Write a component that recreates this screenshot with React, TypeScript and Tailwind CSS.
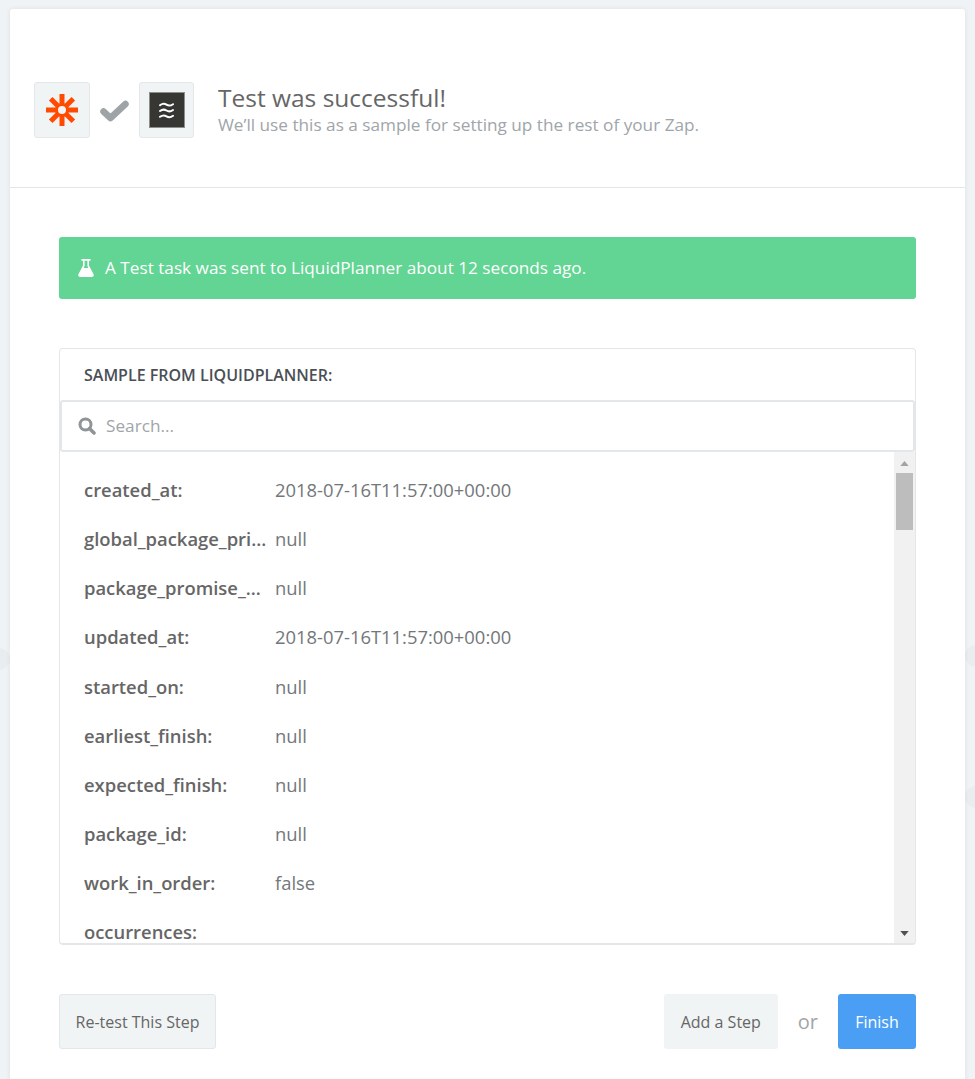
import React from "react";

const rows: [string, string][] = [
  ["created_at:", "2018-07-16T11:57:00+00:00"],
  ["global_package_priority:", "null"],
  ["package_promise_by:", "null"],
  ["updated_at:", "2018-07-16T11:57:00+00:00"],
  ["started_on:", "null"],
  ["earliest_finish:", "null"],
  ["expected_finish:", "null"],
  ["package_id:", "null"],
  ["work_in_order:", "false"],
  ["occurrences:", ""],
];

function ZapierLogo() {
  return (
    <svg width="32" height="32" viewBox="0 0 32 32">
      <g stroke="#ff4a00" strokeWidth="5">
        <line x1="16" y1="0" x2="16" y2="11" />
        <line x1="16" y1="21" x2="16" y2="32" />
        <line x1="0" y1="16" x2="11" y2="16" />
        <line x1="21" y1="16" x2="32" y2="16" />
        <line x1="4.7" y1="4.7" x2="12.5" y2="12.5" />
        <line x1="19.5" y1="19.5" x2="27.3" y2="27.3" />
        <line x1="27.3" y1="4.7" x2="19.5" y2="12.5" />
        <line x1="12.5" y1="19.5" x2="4.7" y2="27.3" />
      </g>
      <circle cx="16" cy="16" r="5.5" fill="#f1f4f5" stroke="#ff4a00" strokeWidth="3" />
    </svg>
  );
}

function LiquidLogo() {
  return (
    <div className="flex h-[36px] w-[36px] items-center justify-center border border-[#8d8d8b] bg-[#363633]">
      <svg width="15" height="17" viewBox="0 0 15 17" fill="none" stroke="#ffffff" strokeWidth="2" strokeLinecap="round">
        <path d="M1 3.2C3.5 1.4 5.5 1.4 7.5 2.7C9.5 4 11.5 4 14 2.2" />
        <path d="M1 9C3.5 7.2 5.5 7.2 7.5 8.5C9.5 9.8 11.5 9.8 14 8" />
        <path d="M1 14.8C3.5 13 5.5 13 7.5 14.3C9.5 15.6 11.5 15.6 14 13.8" />
      </svg>
    </div>
  );
}

export default function App() {
  return (
    <div className="relative h-[1079px] overflow-hidden bg-[#eff3f5] px-[10px] pt-[9px] font-['Open_Sans',sans-serif] text-[#666666]">
      <div className="absolute left-[-12px] top-[648px] h-[22px] w-[22px] rounded-full bg-[#e9edef]" />
      <div className="absolute right-[-12px] top-[645px] h-[22px] w-[22px] rounded-full bg-[#e9edef]" />
      <div className="absolute right-[-12px] top-[786px] h-[22px] w-[22px] rounded-full bg-[#e9edef]" />
      <div className="relative h-[1200px] rounded-t-[3px] bg-white shadow-[0_0_5px_rgba(0,0,0,0.08)]">
        <header className="flex h-[179px] items-start border-b border-[#e3e7e9] pl-[24px] pt-[73px]">
          <div className="flex h-[56px] w-[56px] items-center justify-center rounded-[3px] border border-[#e3e7e9] bg-[#f1f4f5]">
            <ZapierLogo />
          </div>
          <svg className="mx-[10px] mt-[18px]" width="29" height="22" viewBox="0 0 29 22">
            <path d="M3.5 11.5L10.5 18L25.5 4" fill="none" stroke="#9ea3a6" strokeWidth="6.5" strokeLinecap="round" strokeLinejoin="round" />
          </svg>
          <div className="flex h-[56px] w-[55px] items-center justify-center rounded-[3px] border border-[#e3e7e9] bg-[#f1f4f5]">
            <LiquidLogo />
          </div>
          <div className="ml-[24px]">
            <div className="text-[24.5px] leading-[32px] text-[#666666]">Test was successful!</div>
            <div className="text-[17.2px] leading-[22px] text-[#a0a5a9]">We’ll use this as a sample for setting up the rest of your Zap.</div>
          </div>
        </header>

        <main className="px-[49px] pt-[49px]">
          <div className="flex h-[62px] items-center rounded-[3px] bg-[#62d493] pl-[19px] text-[17.2px] text-white">
            <svg className="mr-[11px]" width="16" height="18" viewBox="0 0 16 18" fill="#ffffff">
              <path d="M3.5 0H12.5V1.8H11V6.5L15.6 15.2C16.2 16.5 15.4 18 13.8 18H2.2C0.6 18 -0.2 16.5 0.4 15.2L5 6.5V1.8H3.5V0Z" />
              <path d="M6.6 1.8H9.4V7L10.5 9H5.5L6.6 7Z" fill="#62d493" />
            </svg>
            A Test task was sent to LiquidPlanner about 12 seconds ago.
          </div>

          <section className="mt-[49px] h-[597px] overflow-hidden rounded-[4px] border border-b-2 border-[#e3e7e9]">
            <div className="flex h-[51px] items-center pl-[24px] text-[16px] font-semibold text-[#4a4f55]">SAMPLE FROM LIQUIDPLANNER:</div>
            <div className="flex h-[52px] items-center rounded-[3px] border-2 border-[#e3e7e9] pl-[16px] text-[17.2px] text-[#a0a5a9]">
              <svg className="mr-[10px]" width="18" height="18" viewBox="0 0 18 18" fill="none" stroke="#8f9498">
                <circle cx="7.5" cy="7.5" r="5.5" strokeWidth="3" />
                <line x1="11.5" y1="11.5" x2="16" y2="16" strokeWidth="3.5" strokeLinecap="round" />
              </svg>
              Search...
            </div>
            <div className="flex h-[493px]">
              <div className="min-w-0 flex-1 overflow-hidden pt-[13px]">
                {rows.map(([k, v]) => (
                  <div key={k} className="flex h-[49.2px] items-center pl-[24px] text-[18.4px]">
                    <div className="w-[183px] truncate font-semibold text-[#666666]">{k}</div>
                    <div className="ml-[8px] text-[#73777a]">{v}</div>
                  </div>
                ))}
              </div>
              <div className="relative w-[21px] shrink-0 bg-[#f1f1f1]">
                <svg className="absolute left-[6px] top-[9px]" width="9" height="5" viewBox="0 0 10 6"><path d="M5 0L10 6H0Z" fill="#a3a3a3" /></svg>
                <div className="absolute left-[2px] top-[21px] h-[57px] w-[17px] bg-[#bdbdbd]" />
                <svg className="absolute bottom-[9px] left-[6px]" width="9" height="5" viewBox="0 0 10 6"><path d="M0 0H10L5 6Z" fill="#505050" /></svg>
              </div>
            </div>
          </section>

          <footer className="mt-[49px] flex items-start justify-between">
            <button className="h-[55px] w-[157px] rounded-[3px] border border-[#e3e7e9] bg-[#f1f4f5] text-[16px] text-[#666666]">Re-test This Step</button>
            <div className="flex items-center">
              <button className="h-[55px] w-[114px] rounded-[3px] bg-[#f1f4f5] text-[16px] text-[#666666]">Add a Step</button>
              <span className="mx-[20px] text-[20px] text-[#a0a5a9]">or</span>
              <button className="h-[55px] w-[78px] rounded-[3px] bg-[#4a9ff5] text-[16px] text-white">Finish</button>
            </div>
          </footer>
        </main>
      </div>
    </div>
  );
}
